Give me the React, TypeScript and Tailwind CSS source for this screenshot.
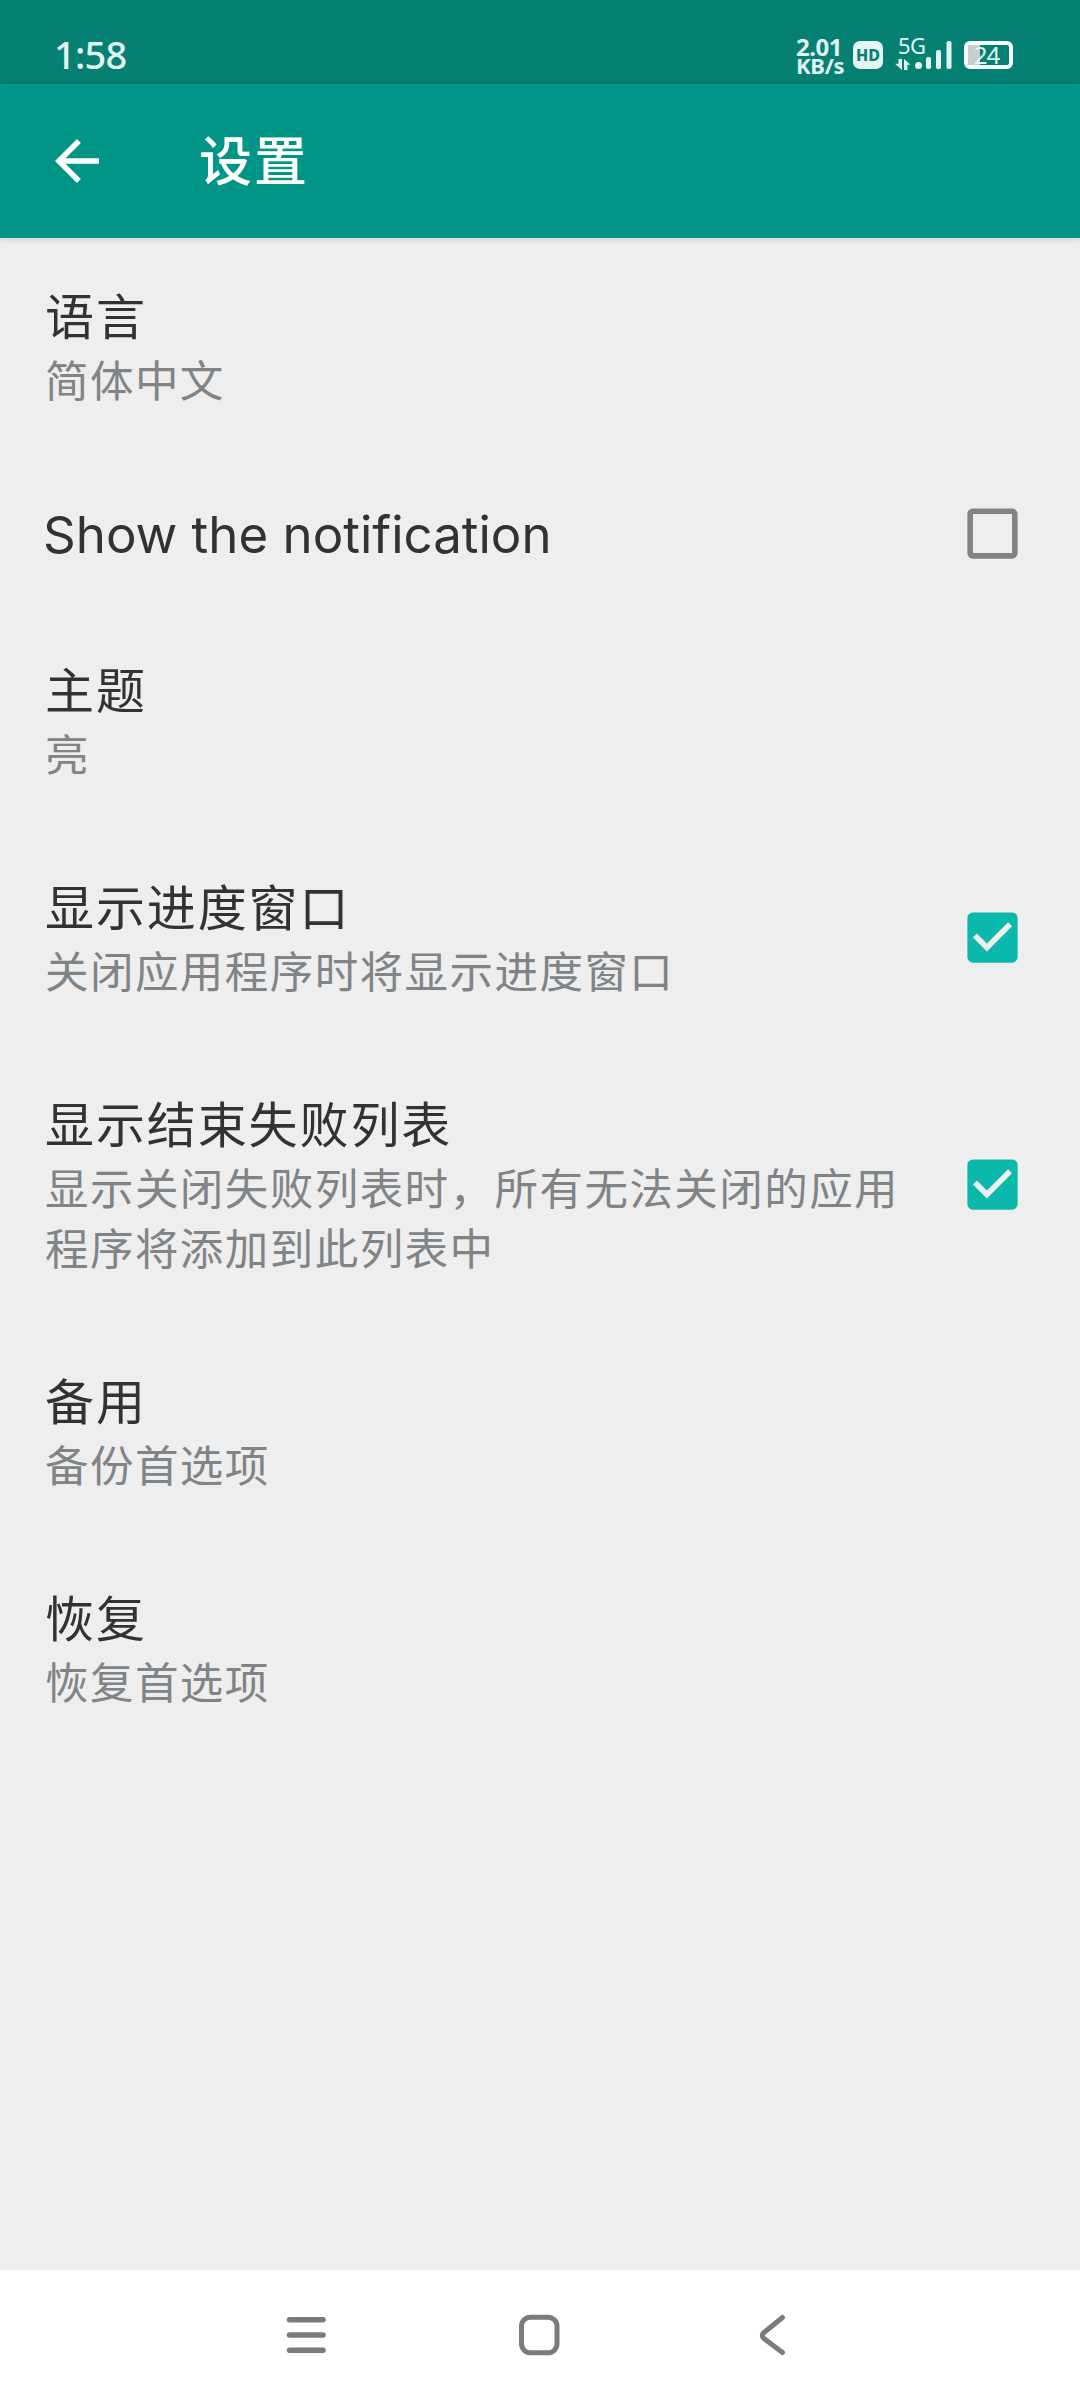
import { useState } from "react";
import {
  MdArrowBack,
  MdCheckBox,
  MdCheckBoxOutlineBlank,
} from "react-icons/md";

interface IPreference {
  id: string;
  title: string;
  summary?: string;
  checkable?: boolean;
}

const preferences: IPreference[] = [
  { id: "language", title: "语言", summary: "简体中文" },
  { id: "notification", title: "Show the notification", checkable: true },
  { id: "theme", title: "主题", summary: "亮" },
  {
    id: "progress",
    title: "显示进度窗口",
    summary: "关闭应用程序时将显示进度窗口",
    checkable: true,
  },
  {
    id: "failed",
    title: "显示结束失败列表",
    summary: "显示关闭失败列表时，所有无法关闭的应用程序将添加到此列表中",
    checkable: true,
  },
  { id: "backup", title: "备用", summary: "备份首选项" },
  { id: "restore", title: "恢复", summary: "恢复首选项" },
];

function StatusBar() {
  return (
    <div className="flex h-[84px] items-start bg-[#058073] pl-[54px] pr-[67px] text-[#e0f5f1]">
      <span className="mt-[29px] font-['Noto_Sans'] text-[38px] leading-[50px] font-medium tracking-[-0.800px]">
        1:58
      </span>

      <div className="mt-[37px] ml-auto w-[50px] font-['Noto_Sans'] font-bold whitespace-nowrap">
        <div className="text-[24px] leading-[19px] tracking-[-0.500px]">2.01</div>
        <div className="text-[22px] leading-[18px] tracking-[-0.300px]">KB/s</div>
      </div>

      <span className="mt-[41px] ml-[7px] flex h-[28px] w-[30px] items-center justify-center rounded-[7px] bg-[#e6f4f2] font-['Noto_Sans'] text-[16px] font-extrabold text-[#058073]">
        HD
      </span>

      <div className="relative mt-[36px] ml-[12px] h-[34px] w-[58px]">
        <span className="absolute -top-px left-[3px] font-['Noto_Sans'] text-[22px] leading-[20px] tracking-[-0.500px]">
          5G
        </span>
        <svg
          viewBox="0 0 58 34"
          className="absolute inset-0 h-[34px] w-[58px]"
          fill="currentColor"
        >
          <path d="M3.500 23h3.500v11L0 27.800h3.500zM9 34V23l6.500 5.700H12.500V34z" />
          <circle cx="23.500" cy="29.500" r="3.500" />
          <rect x="31" y="21" width="5" height="12" rx="1.800" />
          <rect x="41" y="14" width="5" height="19" rx="1.800" />
          <rect x="51.500" y="5" width="5" height="28" rx="1.800" />
        </svg>
      </div>

      <div className="relative mt-[41px] ml-[11px] flex h-[28px] w-[49px] items-center justify-center rounded-[6px] border-4 border-[#f5fffd]">
        <div className="absolute inset-y-0 left-0 w-[12px] bg-[#c9cdcd]" />
        <span className="relative -left-[2px] font-['Noto_Sans'] text-[24px] leading-[20px] tracking-[-1px]">
          24
        </span>
      </div>
    </div>
  );
}

function NavigationBar() {
  return (
    <div className="flex h-[130px] items-center bg-white pl-[286px] text-[#7b7b7b]">
      <svg
        viewBox="0 0 40 42"
        className="h-[42px] w-[40px]"
        stroke="currentColor"
        strokeWidth="5.500"
        strokeLinecap="round"
      >
        <path d="M3.500 5.700H37M3.500 21H37M3.500 36.300H37" />
      </svg>
      <svg
        viewBox="0 0 42 42"
        className="ml-[192px] h-[42px] w-[42px]"
        fill="none"
        stroke="currentColor"
        strokeWidth="5"
      >
        <rect x="3.500" y="3.200" width="35.500" height="35.600" rx="9" />
      </svg>
      <svg
        viewBox="0 0 28 42"
        className="ml-[198px] h-[42px] w-[28px]"
        fill="none"
        stroke="currentColor"
        strokeWidth="5"
        strokeLinecap="round"
      >
        <path d="M24.500 3.500L6 18.500Q2.500 21.500 6 24.500L24.500 38.500" />
      </svg>
    </div>
  );
}

export default function App() {
  const [checked, setChecked] = useState<Record<string, boolean>>({
    notification: false,
    progress: true,
    failed: true,
  });

  const toggle = (item: IPreference) => {
    if (!item.checkable) return;
    setChecked({ ...checked, [item.id]: !checked[item.id] });
  };

  return (
    <div className="flex h-[2400px] w-[1080px] flex-col bg-[#eeeeee] font-['Noto_Sans','Noto_Sans_CJK_SC',sans-serif]">
      <StatusBar />

      <header className="flex h-[154px] items-center bg-[#009587] pl-[44px] text-white shadow-[0_1px_6px_rgba(0,0,0,0.15)]">
        <MdArrowBack className="h-[66px] w-[66px]" />
        <h1 className="ml-[89px] text-[53px] leading-[70px] font-medium tracking-[2px]">
          设置
        </h1>
      </header>

      <main className="flex-1">
        {preferences.map((item) => (
          <div
            key={item.id}
            className="flex items-center pr-[54px] pl-[45px]"
            onClick={() => toggle(item)}
          >
            <div className="w-[864px] pt-[46px] pb-[45px]">
              <h2
                className={
                  item.summary
                    ? "mb-px text-[49px] leading-[65px] tracking-[1.900px] text-[#323232]"
                    : "-ml-[2px] pt-px font-['Inter'] text-[51px] leading-[65px] text-[#323232]"
                }
              >
                {item.title}
              </h2>
              {item.summary && (
                <p className="text-[43.500px] leading-[60px] tracking-[1.450px] text-[#808486]">
                  {item.summary}
                </p>
              )}
            </div>
            {item.checkable &&
              (checked[item.id] ? (
                <MdCheckBox className="ml-auto h-[67px] w-[67px] text-[#0ab9ab]" />
              ) : (
                <MdCheckBoxOutlineBlank className="ml-auto h-[67px] w-[67px] text-[#808486]" />
              ))}
          </div>
        ))}
      </main>

      <NavigationBar />
    </div>
  );
}
